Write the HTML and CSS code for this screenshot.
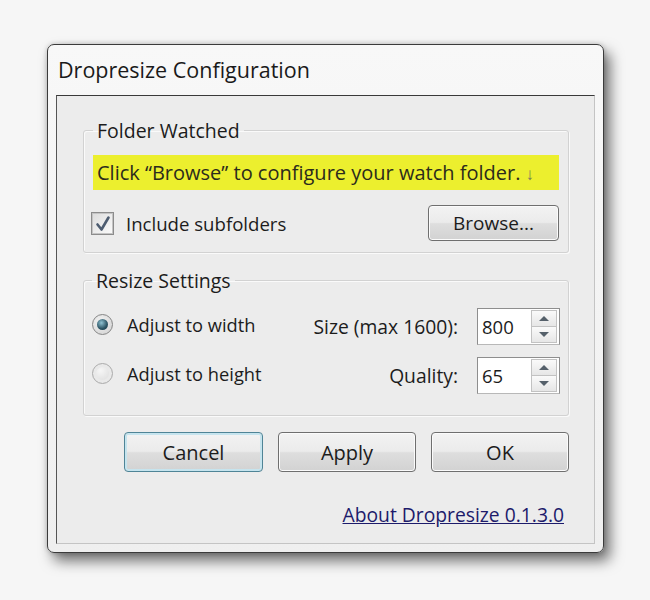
FILE: index.html
```html
<!DOCTYPE html>
<html lang="en">
<head>
    <meta charset="UTF-8">
    <meta name="viewport" content="width=device-width, initial-scale=1.0">
    <title>Dropresize Configuration</title>
    <link rel="stylesheet" href="styles.css">
</head>
<body>
    <div class="window">
        <div class="titlebar">Dropresize Configuration</div>
        <div class="client">
            <fieldset class="group group-folder">
                <legend>Folder Watched</legend>
                <div class="notice">Click “Browse” to configure your watch folder. <span class="notice-arrow">↓</span></div>
                <div class="folder-row">
                    <label class="check">
                        <span class="checkbox">
                            <svg width="22" height="22" viewBox="0 0 22 22">
                                <path d="M5.5 11.5 L9.5 16.5 L16.5 4.5" fill="none" stroke="#4d5c70" stroke-width="2.6" stroke-linejoin="round" stroke-linecap="round"/>
                            </svg>
                        </span>
                        Include subfolders
                    </label>
                    <button type="button" class="btn btn-browse">Browse...</button>
                </div>
            </fieldset>

            <fieldset class="group group-resize">
                <legend>Resize Settings</legend>
                <div class="resize-grid">
                    <label class="radio"><span class="radio-mark checked"></span>Adjust to width</label>
                    <span class="field-label">Size (max 1600):</span>
                    <div class="spin">
                        <span class="spin-value">800</span>
                        <span class="spin-buttons">
                            <span class="spin-btn"><span class="arrow-up"></span></span>
                            <span class="spin-btn"><span class="arrow-down"></span></span>
                        </span>
                    </div>

                    <label class="radio"><span class="radio-mark"></span>Adjust to height</label>
                    <span class="field-label">Quality:</span>
                    <div class="spin">
                        <span class="spin-value">65</span>
                        <span class="spin-buttons">
                            <span class="spin-btn"><span class="arrow-up"></span></span>
                            <span class="spin-btn"><span class="arrow-down"></span></span>
                        </span>
                    </div>
                </div>
            </fieldset>

            <div class="actions">
                <button type="button" class="btn btn-action btn-default">Cancel</button>
                <button type="button" class="btn btn-action">Apply</button>
                <button type="button" class="btn btn-action">OK</button>
            </div>

            <div class="about">
                <a href="#" class="about-link">About Dropresize 0.1.3.0</a>
            </div>
        </div>
    </div>
</body>
</html>
```

FILE: styles.css
```css
body {
    margin: 0;
    padding: 0;
    width: 650px;
    height: 600px;
    overflow: hidden;
    background-color: #f6f6f6;
    font-family: "Open Sans", "Liberation Sans", sans-serif;
    font-size: 18px;
    color: #1c1c1c;
}

.window {
    box-sizing: border-box;
    width: 557px;
    height: 509px;
    margin: 44px 0 0 47px;
    border: 1px solid #3b3b3b;
    border-radius: 7px;
    background: linear-gradient(#f8f8f8, #efefef);
    box-shadow: 6px 8px 14px rgba(0, 0, 0, 0.55), 0 0 5px rgba(0, 0, 0, 0.2);
}

.titlebar {
    height: 50px;
    padding-left: 10px;
    line-height: 50px;
    font-size: 21.5px;
    color: #1a1a1a;
}

.client {
    box-sizing: border-box;
    height: 449px;
    margin: 0 8px;
    padding: 22px 25px 0 26px;
    background-color: #ececec;
    border-top: 1px solid #3a3a3a;
    border-left: 1px solid #555;
    border-right: 1px solid #c4c4c4;
    border-bottom: 1px solid #c4c4c4;
}

.group {
    margin: 0;
    border: 1px solid #d2d2d2;
    border-radius: 3px;
    box-shadow: inset 1px 1px 0 #fafafa, 1px 1px 0 #fafafa;
}

.group legend {
    padding: 0 4px;
    line-height: 25px;
    font-size: 19.5px;
}

.group-folder {
    padding: 12px 9px 11px 9px;
}

.notice {
    height: 35px;
    line-height: 35px;
    padding-left: 4px;
    font-size: 20px;
    background-color: #ecef2e;
    color: #2b2b1c;
}

.notice-arrow {
    font-size: 17px;
    color: #77775a;
}

.folder-row {
    display: flex;
    align-items: center;
    justify-content: space-between;
    height: 36px;
    margin-top: 15px;
}

.check {
    display: flex;
    align-items: center;
    gap: 12px;
    margin-left: -2px;
    font-size: 18.6px;
}

.checkbox {
    box-sizing: border-box;
    display: block;
    width: 23px;
    height: 23px;
    border: 1px solid #8c8c8c;
    background: linear-gradient(135deg, #dcdcdc, #fbfbfb);
    box-shadow: inset 0 0 0 1px #c4c4c4;
}

.checkbox svg {
    display: block;
}

.btn {
    box-sizing: border-box;
    font-family: inherit;
    font-size: 20px;
    color: #1c1c1c;
    border: 1px solid #6f6f6f;
    border-radius: 4px;
    background: linear-gradient(#f3f3f3 0%, #ebebeb 48%, #dedede 52%, #d2d2d2 100%);
    box-shadow: inset 0 0 0 1px #fbfbfb;
    padding: 0;
    cursor: pointer;
}

.btn-browse {
    width: 131px;
    height: 36px;
    font-size: 19px;
}

.group-resize {
    margin-top: 15px;
    padding: 15px 8px 21px 8px;
}

.resize-grid {
    display: grid;
    grid-template-columns: 1fr auto 83px;
    grid-auto-rows: 37px;
    row-gap: 12px;
    column-gap: 19px;
    align-items: center;
}

.radio {
    display: flex;
    align-items: center;
    gap: 14px;
    margin-top: -4px;
    font-size: 18.3px;
}

.radio-mark {
    box-sizing: border-box;
    width: 21px;
    height: 21px;
    border-radius: 50%;
    border: 1px solid #ababab;
    background: radial-gradient(circle at 40% 35%, #f6f6f6, #d4d4d4);
    box-shadow: inset 0 0 0 3px #e9e9e9;
    display: flex;
    align-items: center;
    justify-content: center;
}

.radio-mark.checked {
    border-color: #868686;
    background: radial-gradient(circle at 40% 35%, #f4f4f4, #cfcfcf);
    box-shadow: none;
}

.radio-mark.checked::after {
    content: "";
    width: 11px;
    height: 11px;
    border-radius: 50%;
    background: radial-gradient(circle at 40% 35%, #8fc2d2, #2a5262 60%, #1c3a48);
}

.field-label {
    text-align: right;
    font-size: 19.3px;
}

.spin {
    box-sizing: border-box;
    display: flex;
    justify-content: space-between;
    align-items: stretch;
    height: 37px;
    padding: 1px 2px 1px 0;
    background-color: #fff;
    border: 1px solid #8e8e8e;
    border-bottom-color: #b8b8b8;
}

.spin-value {
    padding-left: 4px;
    line-height: 34px;
    font-size: 18.5px;
}

.spin-buttons {
    display: flex;
    flex-direction: column;
    width: 26px;
}

.spin-btn {
    flex: 1;
    display: flex;
    align-items: center;
    justify-content: center;
    border: 1px solid #c2c2c2;
    background: linear-gradient(#fafafa, #e6e6e6);
}

.spin-btn + .spin-btn {
    border-top: none;
}

.arrow-up {
    width: 0;
    height: 0;
    border-left: 5px solid transparent;
    border-right: 5px solid transparent;
    border-bottom: 5px solid #55606a;
}

.arrow-down {
    width: 0;
    height: 0;
    border-left: 5px solid transparent;
    border-right: 5px solid transparent;
    border-top: 5px solid #55606a;
}

.actions {
    display: flex;
    justify-content: flex-end;
    gap: 15px;
    margin-top: 16px;
}

.btn-action {
    width: 138px;
    height: 40px;
}

.btn-default {
    width: 139px;
    border-color: #4f8496;
    box-shadow: inset 0 0 0 2px #c6e4ee;
}

.about {
    text-align: right;
    margin-top: 30px;
    padding-right: 5px;
    line-height: 25px;
    font-size: 19.3px;
}

.about-link {
    color: #1d1b6b;
    text-decoration: underline;
}
```
